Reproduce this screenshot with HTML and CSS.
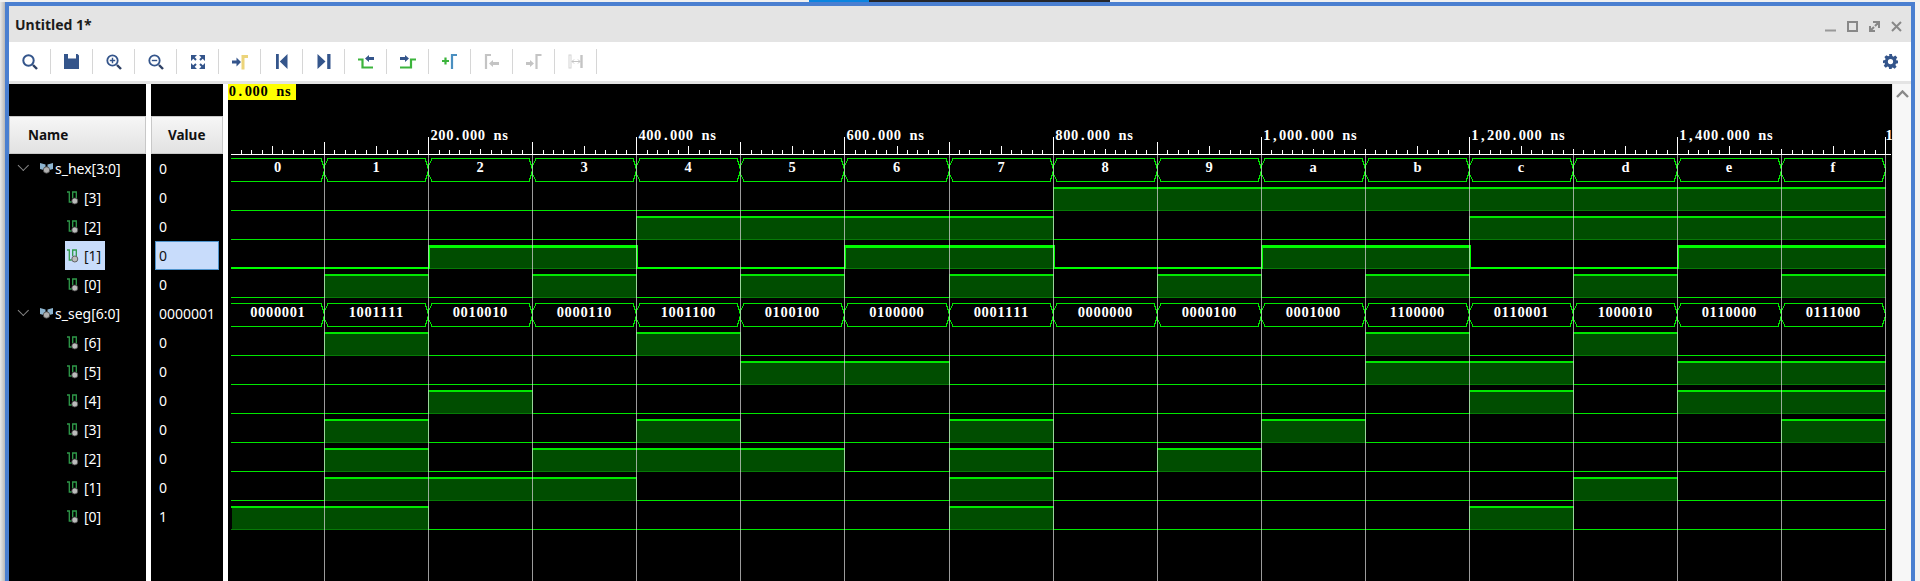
FILE: index.html
```html
<!DOCTYPE html>
<html lang="en">
<head>
    <meta charset="UTF-8">
    <title>Untitled 1*</title>
    <link rel="stylesheet" href="styles.css">
</head>
<body>
    <div class="topstrip"><div class="taskblue"></div><div class="taskdark"></div></div>
    <div class="window">
        <div class="titlebar">
            <span class="title">Untitled 1*</span>
            <div class="winbtns">
                <svg viewBox="0 0 11 11"><path d="M0 9.500h11" stroke="#999" stroke-width="2"/></svg>
                <svg viewBox="0 0 11 11"><rect x="1" y="1" width="9" height="9" fill="none" stroke="#888" stroke-width="2"/></svg>
                <svg viewBox="0 0 11 11"><path d="M4 1h6v6M9 2L6 5M1 5v5h5M2 9l3-3" fill="none" stroke="#888" stroke-width="2"/></svg>
                <svg viewBox="0 0 11 11"><path d="M1 1l9 9M10 1l-9 9" fill="none" stroke="#888" stroke-width="2"/></svg>
            </div>
        </div>
        <div class="toolbar">
            <div class="tool"><svg viewBox="0 0 16 16"><circle cx="6.500" cy="6.500" r="5.200" fill="none" stroke="#34558b" stroke-width="2"/><path d="M11 11l4 4" stroke="#2d3f63" stroke-width="2.400"/></svg></div>
            <div class="tool"><svg viewBox="0 0 16 16"><path d="M0 0h4v4.500h8V0h1.500L15 1.500V15H0z" fill="#34558b"/></svg></div>
            <div class="tool"><svg viewBox="0 0 16 16"><circle cx="6.500" cy="6.500" r="5.200" fill="none" stroke="#34558b" stroke-width="1.800"/><path d="M3.800 6.500h5.400M6.500 3.800v5.400" stroke="#34558b" stroke-width="1.400"/><path d="M11 11l4 4" stroke="#2d3f63" stroke-width="2.400"/></svg></div>
            <div class="tool"><svg viewBox="0 0 16 16"><circle cx="6.500" cy="6.500" r="5.200" fill="none" stroke="#34558b" stroke-width="1.800"/><path d="M3.800 6.500h5.400" stroke="#34558b" stroke-width="1.400"/><path d="M11 11l4 4" stroke="#2d3f63" stroke-width="2.400"/></svg></div>
            <div class="tool"><svg viewBox="0 0 16 16"><path d="M1 1h6L1 7zM15 1v6L9 1zM1 15V9l6 6zM15 15H9l6-6z" fill="#34558b"/><path d="M3 3l3 3M13 3l-3 3M3 13l3-3M13 13l-3-3" stroke="#34558b" stroke-width="2"/></svg></div>
            <div class="tool"><svg viewBox="0 0 16 16"><path d="M0 6.500h4.500V3.500L9 8l-4.500 4.500V9.500H0z" fill="#34558b"/><path d="M11 15.500V2.500h5" fill="none" stroke="#ecd47a" stroke-width="3"/></svg></div>
            <div class="tool"><svg viewBox="0 0 16 16"><path d="M2 0h2.800v15H2zM13.500 0v15L5.800 7.500z" fill="#34558b"/></svg></div>
            <div class="tool"><svg viewBox="0 0 16 16"><path d="M14.500 0h-3.300v15h3.300zM1.500 0v15l8-7.500z" fill="#34558b"/></svg></div>
            <div class="tool"><svg viewBox="0 0 16 16"><path d="M0 5.500h4.500v8H15" fill="none" stroke="#3cb43c" stroke-width="2.200"/><path d="M7 4.500L11 1v2h5v3h-5v2z" fill="#34558b"/></svg></div>
            <div class="tool"><svg viewBox="0 0 16 16"><path d="M0 13.500h11v-8h5" fill="none" stroke="#3cb43c" stroke-width="2.200"/><path d="M0 3h5V1l4 3.500L5 8V6H0z" fill="#34558b"/></svg></div>
            <div class="tool"><svg viewBox="0 0 16 16"><path d="M0 7h7M3.500 3.500v7" stroke="#3cb43c" stroke-width="2.200"/><path d="M10 15V1h5" fill="none" stroke="#4a8fc0" stroke-width="2.200"/></svg></div>
            <div class="tool"><svg viewBox="0 0 16 16"><path d="M2 15V1h5" fill="none" stroke="#c4c4c4" stroke-width="2.200"/><path d="M5 9.500L9 6v2h6v3H9v2z" fill="#c4c4c4"/></svg></div>
            <div class="tool"><svg viewBox="0 0 16 16"><path d="M0 8h4V6l4 3.500L4 13v-2H0z" fill="#c4c4c4"/><path d="M10.500 15V1h5" fill="none" stroke="#c4c4c4" stroke-width="2.200"/></svg></div>
            <div class="tool"><svg viewBox="0 0 16 16"><rect x="1" y="1" width="2" height="13" fill="none" stroke="#d4d4d4"/><path d="M13.500 1v13" stroke="#c4c4c4" stroke-width="2.400"/><path d="M4 7.500h8M6 5.500l-2 2 2 2M10 5.500l2 2-2 2" fill="none" stroke="#c4c4c4"/></svg></div>
            <div class="gear"><svg viewBox="0 0 16 16"><path fill-rule="evenodd" d="M6.500 0h3l.4 2.200 1.300.6L13.100 1.500l2.100 2.100-1.300 1.900.6 1.300L16 6.900v3l-2.200.4-.6 1.300 1.300 1.900-2.100 2.100-1.900-1.300-1.300.6L9.500 16h-3l-.4-2.100-1.300-.6-1.900 1.300-2.100-2.100 1.300-1.900-.6-1.300L0 9.900v-3l2.200-.4.600-1.300-1.300-1.900 2.100-2.100 1.900 1.300 1.300-.6zM8 5.200a2.800 2.800 0 1 0 0 5.600 2.800 2.800 0 0 0 0-5.600z" fill="#34558b"/></svg></div>
        </div>
        <div class="panels">
            <div class="names">
                <div class="colhead">Name</div>
                <div class="row bus"><span class="chev"></span><svg class="busicon" viewBox="0 0 13 11"><use href="#bus"/></svg><span>s_hex[3:0]</span></div>
                <div class="row bit"><svg class="biticon" viewBox="0 0 12 14"><use href="#bit"/></svg><span>[3]</span></div>
                <div class="row bit"><svg class="biticon" viewBox="0 0 12 14"><use href="#bit"/></svg><span>[2]</span></div>
                <div class="row bit"><span class="picked"><svg class="biticon" viewBox="0 0 12 14"><use href="#bit"/></svg><span>[1]</span></span></div>
                <div class="row bit"><svg class="biticon" viewBox="0 0 12 14"><use href="#bit"/></svg><span>[0]</span></div>
                <div class="row bus"><span class="chev"></span><svg class="busicon" viewBox="0 0 13 11"><use href="#bus"/></svg><span>s_seg[6:0]</span></div>
                <div class="row bit"><svg class="biticon" viewBox="0 0 12 14"><use href="#bit"/></svg><span>[6]</span></div>
                <div class="row bit"><svg class="biticon" viewBox="0 0 12 14"><use href="#bit"/></svg><span>[5]</span></div>
                <div class="row bit"><svg class="biticon" viewBox="0 0 12 14"><use href="#bit"/></svg><span>[4]</span></div>
                <div class="row bit"><svg class="biticon" viewBox="0 0 12 14"><use href="#bit"/></svg><span>[3]</span></div>
                <div class="row bit"><svg class="biticon" viewBox="0 0 12 14"><use href="#bit"/></svg><span>[2]</span></div>
                <div class="row bit"><svg class="biticon" viewBox="0 0 12 14"><use href="#bit"/></svg><span>[1]</span></div>
                <div class="row bit"><svg class="biticon" viewBox="0 0 12 14"><use href="#bit"/></svg><span>[0]</span></div>
            </div>
            <div class="values">
                <div class="colhead">Value</div>
                <div class="val">0</div>
                <div class="val">0</div>
                <div class="val">0</div>
                <div class="val picked">0</div>
                <div class="val">0</div>
                <div class="val">0000001</div>
                <div class="val">0</div>
                <div class="val">0</div>
                <div class="val">0</div>
                <div class="val">0</div>
                <div class="val">0</div>
                <div class="val">0</div>
                <div class="val">1</div>
            </div>
            <div class="wave"><svg id="wave" viewBox="228 84 1664 497" width="1664" height="497"></svg></div>
            <div class="scroll"><svg viewBox="0 0 13 8"><path d="M1 7l5.500-5.500L12 7" fill="none" stroke="#8a8a8a" stroke-width="2.400"/></svg></div>
        </div>
    </div>
    <svg class="defs"><defs>
        <g id="bit"><path d="M0 1h2.300v10h2.400" fill="none" stroke="#2f9a4a" stroke-width="1.300"/><path d="M5.700 7V1h3.600v6" fill="none" stroke="#2f9a4a" stroke-width="1.300"/><circle cx="7.800" cy="10" r="3" fill="#bcbcbc" stroke="#4a4a4a" stroke-width=".8"/></g>
        <g id="bus"><path d="M0 0l5.500 1.500v6L0 6zM13 0L7.500 1.500v6L13 6z" fill="#8db4cf"/><circle cx="6.500" cy="7" r="3.200" fill="#b0b0b0" stroke="#444" stroke-width=".8"/></g>
    </defs></svg>
    <script src="wave.js"></script>
</body>
</html>
```

FILE: styles.css
```css
html, body {
    margin: 0;
    height: 581px;
    overflow: hidden;
    font-family: "Noto Sans", Arial, sans-serif;
}
body {
    background: linear-gradient(to right, #e8e8e8, #b8b8b8 5px, #f2f2f2 5px);
}
.topstrip {
    height: 2px;
    background: #f0f0f0;
    padding-left: 809px;
    display: flex;
}
.taskblue {
    width: 60px;
    background: #0a84e0;
}
.taskdark {
    width: 241px;
    background: #24262a;
}
.window {
    margin: 0 5px;
    height: 579px;
    border: 4px solid #4a7fd0;
    border-bottom: none;
    box-sizing: border-box;
    display: flex;
    flex-direction: column;
    background: #fff;
}
.titlebar {
    height: 36px;
    background: #e4e4e4;
    display: flex;
    align-items: center;
    justify-content: space-between;
    flex-shrink: 0;
}
.title {
    margin-left: 6px;
    font-size: 14px;
    font-weight: 700;
    color: #1c1c1c;
}
.winbtns {
    display: flex;
    gap: 11px;
    margin-right: 9px;
    margin-top: 5px;
}
.winbtns svg {
    width: 11px;
    height: 11px;
}
.toolbar {
    height: 39px;
    background: #fff;
    border-bottom: 3px solid #e4e4e4;
    display: flex;
    align-items: center;
    flex-shrink: 0;
}
.tool {
    width: 41px;
    height: 25px;
    border-right: 1px solid #d6d6d6;
    display: flex;
    align-items: center;
    justify-content: center;
}
.tool svg {
    width: 16px;
    height: 16px;
}
.gear {
    margin-left: auto;
    margin-right: 13px;
    display: flex;
}
.gear svg {
    width: 15px;
    height: 15px;
}
.panels {
    flex: 1;
    display: flex;
    min-height: 0;
    background: #fff;
}
.names, .values {
    background: #000;
    color: #fff;
    padding-top: 32px;
    font-size: 14px;
}
.names {
    width: 137px;
    margin-right: 5px;
}
.values {
    width: 72px;
    margin-right: 5px;
}
.colhead {
    height: 38px;
    box-sizing: border-box;
    background: linear-gradient(#f6f6f6, #e2e2e2);
    border: 1px solid #c8c8c8;
    color: #111;
    font-weight: 700;
    font-size: 13.500px;
    display: flex;
    align-items: center;
    padding-left: 18px;
}
.values .colhead {
    padding-left: 16px;
}
.row {
    height: 29px;
    display: flex;
    align-items: center;
}
.row.bus {
    padding-left: 11px;
}
.row.bit {
    padding-left: 58px;
}
.chev {
    width: 7px;
    height: 7px;
    border-right: 1.500px solid #888;
    border-bottom: 1.500px solid #888;
    transform: rotate(45deg) translate(-3px, -2px);
    margin-right: 12px;
}
.busicon {
    width: 13px;
    height: 11px;
    margin-right: 2px;
}
.biticon {
    width: 12px;
    height: 14px;
    margin-right: 5px;
}
.row .picked {
    display: flex;
    align-items: center;
    height: 29px;
    width: 40px;
    margin-left: -2px;
    padding-left: 2px;
    box-sizing: border-box;
    background: #c8dcfb;
    color: #111;
}
.val {
    height: 29px;
    line-height: 29px;
    padding-left: 8px;
    box-sizing: border-box;
}
.val.picked {
    margin: 0 4px;
    padding-left: 3px;
    line-height: 27px;
    background: #c8dcfb;
    border: 1px solid #4f94cd;
    color: #111;
}
.wave {
    width: 1664px;
    background: #000;
    flex-shrink: 0;
}
.wave svg {
    display: block;
}
.wave text {
    font-family: "Liberation Serif", serif;
    font-weight: 700;
    font-size: 14.500px;
    fill: #fff;
}
.wave text.mark {
    fill: #000;
}
.wave polyline {
    shape-rendering: crispEdges;
}
.scroll {
    flex: 1;
    background: #f7f7f7;
    border-left: 1px solid #e6e6e6;
    display: flex;
    justify-content: center;
    padding-top: 6px;
}
.scroll svg {
    width: 13px;
    height: 8px;
}
.defs {
    position: absolute;
    width: 0;
    height: 0;
}
```

FILE: wave.js
```js
// stimulus: counter 0..f and its seven segment decode
const hexNames = "0123456789abcdef";
const seg = ["0000001", "1001111", "0010010", "0000110", "1001100", "0100100", "0100000", "0001111",
    "0000000", "0000100", "0001000", "1100000", "0110001", "1000010", "0110000", "0111000"];

const step = 104.08;
const cell = 7.9;
const bx = (i) => i === 0 ? 231 : Math.round(220 + step * i);
const rowTop = (r) => 158 + 29 * r;
let out = "";

function rect(x, y, w, h, color) {
    return `<rect x="${x}" y="${y}" width="${w}" height="${h}" fill="${color}"/>`;
}

// the serif face is proportional, so every glyph gets its own monospaced cell
function mono(s, x, y, cls) {
    const narrow = { ".": 3.6, ",": 3.6, " ": 3.6, f: 4.8, s: 5.6, c: 6.4, e: 6.4 };
    const xs = s.split("").map((ch, k) => {
        const w = narrow[ch] || 7.2;
        return (x + k * cell + (cell - w) / 2).toFixed(1);
    });
    const c = cls ? ` class="${cls}"` : "";
    return `<text${c} x="${xs.join(" ")}" y="${y}">${s}</text>`;
}

function drawBit(r, bits, picked) {
    const top = rowTop(r) + 1;
    const low = rowTop(r) + 23;
    const lw = picked ? 2 : 1;
    const color = picked ? "#00ff00" : "#00e800";
    let i = 0;
    while (i < 16) {
        let j = i;
        while (j + 1 < 16 && bits[j + 1] === bits[i]) j++;
        const a = bx(i);
        const b = bx(j + 1);
        if (bits[i]) {
            out += rect(a + (i === 0 ? 1 : 0), top, b - a, low - top + 1, "#004d00");
            out += rect(a, low, b - a + 1, 1, "#067a06");
            out += rect(a, top - 1, b - a + 1, picked ? 3 : 2, color);
            if (i > 0) out += rect(a, top - 1, picked ? 2 : 1, low - top + 2, color);
            if (j < 15) out += rect(b, top - 1, picked ? 2 : 1, low - top + 2, color);
        } else {
            out += rect(a, low - lw + 1, b - a + 1, lw, color);
        }
        i = j + 1;
    }
}

function drawBus(r, labels) {
    const t = rowTop(r) + 0.5;
    const b = t + 23;
    const m1 = t + 9;
    const m2 = b - 9;
    for (let i = 0; i < 16; i++) {
        const a = bx(i);
        const z = bx(i + 1);
        const pts = i === 0
            ? `${a},${t} ${z - 3},${t} ${z},${m1} ${z},${m2} ${z - 3},${b} ${a},${b}`
            : `${a},${m1} ${a + 4},${t} ${z - 3},${t} ${z},${m1} ${z},${m2} ${z - 3},${b} ${a + 4},${b} ${a},${m2} ${a},${m1}`;
        out += `<polyline points="${pts}" fill="none" stroke="#00e800" stroke-width="1"/>`;
        if (i > 0) {
            out += rect(a - 1, m1 - 1, 2, 2, "#00ff00");
            out += rect(a - 1, m2 - 1, 2, 2, "#00ff00");
        }
        const w = labels[i].length * cell;
        out += mono(labels[i], (a + z) / 2 - w / 2, rowTop(r) + 14);
    }
}

// ruler
out += rect(231, 154, 1660, 1, "#fff");
for (let t = 0; t <= 165; t++) {
    const x = Math.round(220 + step * t / 10);
    if (x < 232 || x > 1890 || t % 10 === 0) continue;
    let h = 4;
    if (t % 5 === 0) h = [25, 85, 105].includes(t) ? 5 : 8;
    out += rect(x, 154 - h, 1, h, "#fff");
}

// rows
drawBus(0, hexNames.split(""));
for (let b = 3; b >= 0; b--) {
    const bits = [];
    for (let i = 0; i < 16; i++) bits.push((i >> b) & 1);
    drawBit(4 - b, bits, b === 1);
}
drawBus(5, seg);
for (let b = 6; b >= 0; b--) {
    drawBit(12 - b, seg.map((s) => s[6 - b] === "1" ? 1 : 0), false);
}

// 100 ns grid, drawn over the fills
for (let i = 1; i <= 16; i++) {
    const x = bx(i);
    let y = 137;
    if (i % 2) y = i < 10 ? 142 : 149;
    out += rect(x, y, 1, 154 - y, "#fff");
    out += `<rect x="${x}" y="155" width="1" height="426" fill="#cfcfcf" opacity=".75"/>`;
}
for (let i = 2; i <= 14; i += 2) {
    const ns = (i * 100).toLocaleString("en-US") + ".000 ns";
    out += mono(ns, bx(i) + 2, 140);
}
// the next label only shows its first digit before the panel ends
out += `<text x="1885.5" y="140">1</text>`;

// cursor time
out += rect(228, 84, 68, 16, "#ffff00");
out += mono("0.000 ns", 228.5, 96, "mark");

document.getElementById("wave").innerHTML = out;
```
